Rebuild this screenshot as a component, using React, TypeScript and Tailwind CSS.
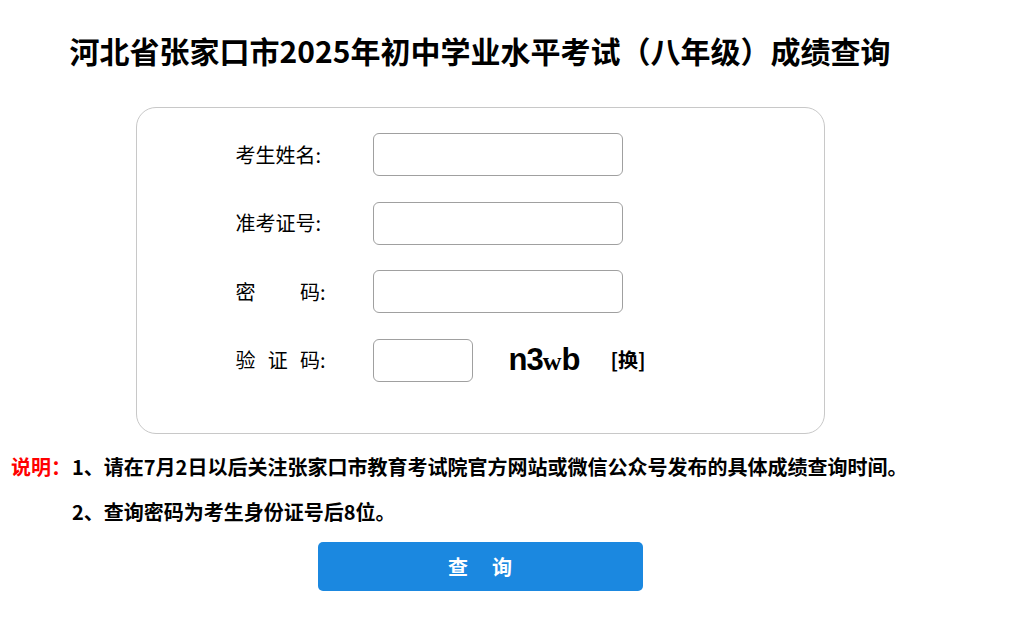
const font = { fontFamily: '"Noto Sans CJK SC", "Noto Sans", sans-serif' };

function Label({ parts }: { parts: string[] }) {
  return (
    <div className="w-[137px] shrink-0">
      <div className="flex w-[90px] justify-between text-[20px] text-black">
        {parts.map((p, i) => (
          <span key={i}>{p}</span>
        ))}
      </div>
    </div>
  );
}

export default function App() {
  return (
    <div className="min-h-screen bg-white" style={font}>
      <div className="w-[960px] flex flex-col items-center">
        {/* TITLE */}
        <h1 className="mt-[30px] text-[30px] font-bold leading-[40px] text-black">
          河北省张家口市2025年初中学业水平考试（八年级）成绩查询
        </h1>

        {/* FORM CARD */}
        <div className="mt-[37px] w-[689px] h-[327px] rounded-[20px] border border-[#c8c8c8] pl-[99px] pt-[25px] flex flex-col gap-[25.5px]">
          <div className="flex items-center h-[43px]">
            <Label parts={["考生姓名:"]} />
            <input className="w-[250px] h-[43px] rounded-[6px] border border-[#a0a0a0] outline-none px-2" />
          </div>
          <div className="flex items-center h-[43px]">
            <Label parts={["准考证号:"]} />
            <input className="w-[250px] h-[43px] rounded-[6px] border border-[#a0a0a0] outline-none px-2" />
          </div>
          <div className="flex items-center h-[43px]">
            <Label parts={["密", "码:"]} />
            <input className="w-[250px] h-[43px] rounded-[6px] border border-[#a0a0a0] outline-none px-2" />
          </div>
          <div className="flex items-center h-[43px]">
            <Label parts={["验", "证", "码:"]} />
            <input className="w-[100px] h-[43px] rounded-[6px] border border-[#a0a0a0] outline-none px-2" />
            <span className="ml-[36px] w-[102px] flex items-baseline font-bold text-black" style={{ fontFamily: '"Liberation Sans", sans-serif' }}>
              <span className="text-[31px] tracking-[-1px]">n3</span>
              <span className="text-[26px]" style={{ fontFamily: '"Liberation Serif", serif' }}>w</span>
              <span className="text-[31px]">b</span>
            </span>
            <span className="text-[20px] font-bold text-black">[换]</span>
          </div>
        </div>

        {/* NOTES */}
        <div className="self-start mt-[19px] pl-[11px] text-[20px] font-bold text-black leading-[28px]">
          <div className="flex">
            <span className="w-[61px] text-[#ff0000]">说明：</span>
            <span>1、请在7月2日以后关注张家口市教育考试院官方网站或微信公众号发布的具体成绩查询时间。</span>
          </div>
          <div className="pl-[61px] mt-[17px]">2、查询密码为考生身份证号后8位。</div>
        </div>

        {/* SUBMIT */}
        <button className="mt-[16px] w-[325px] h-[49px] rounded-[5px] bg-[#1b88e0] text-white text-[20px] font-bold tracking-[24px] pl-[24px]">
          查询
        </button>
      </div>
    </div>
  );
}
